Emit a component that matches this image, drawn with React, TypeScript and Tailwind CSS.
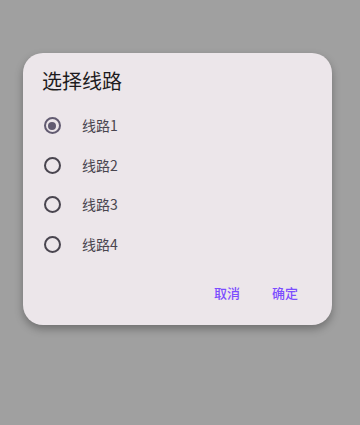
import React, { useState } from "react";

const font = { fontFamily: '"Noto Sans CJK SC", "Noto Sans", Roboto, sans-serif' };

export default function App() {
  const [sel, setSel] = useState(0);
  const items = ["线路1", "线路2", "线路3", "线路4"];
  return (
    <div className="w-[360px] h-[425px] bg-[#a0a0a0] pt-[53px] pl-[23px]" style={font}>
      <div className="w-[309px] h-[272px] bg-[#ece6ea] rounded-[20px] shadow-[0_4px_8px_rgba(0,0,0,0.3)] flex flex-col pt-[14px]">
        <div className="pl-[19px] h-[28px] text-[20px] leading-[28px] text-[#1d1b20]">选择线路</div>
        <div className="mt-[11px] flex flex-col">
          {items.map((t, i) => (
            <div key={t} className="h-[39.5px] flex items-center pl-[20.5px] cursor-pointer" onClick={() => setSel(i)}>
              <div
                className={
                  "w-[17px] h-[17px] rounded-full border-2 flex items-center justify-center " +
                  (i === sel ? "border-[#625b71]" : "border-[#49454f]")
                }
              >
                {i === sel && <div className="w-[8px] h-[8px] rounded-full bg-[#625b71]" />}
              </div>
              <span className="ml-[21.5px] text-[14px] text-[#49454f]">{t}</span>
            </div>
          ))}
        </div>
        <div className="mt-[11px] flex justify-end gap-[8px] pr-[22px]">
          <button className="h-[36px] px-[12px] text-[13px] font-medium text-[#7c4dff]">取消</button>
          <button className="h-[36px] px-[12px] text-[13px] font-medium text-[#7c4dff]">确定</button>
        </div>
      </div>
    </div>
  );
}
